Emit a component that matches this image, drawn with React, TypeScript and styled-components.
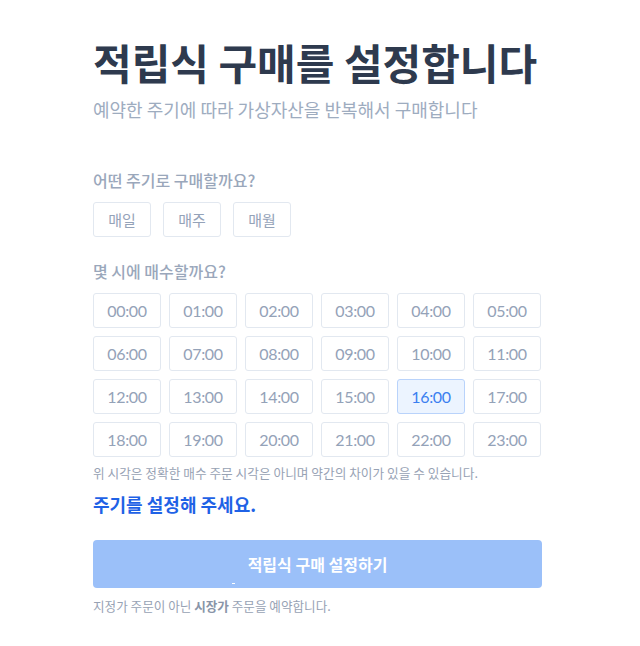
import React, { useState } from 'react'
import styled, { createGlobalStyle } from 'styled-components'

const colors = {
  title: '#2e3a4e',
  sub: '#9eacbf',
  label: '#9aa7bb',
  line: '#e2e8f0',
  time: '#94a2b8',
  blue: '#1f62e6',
  selectedBg: '#ecf4ff',
  selectedLine: '#b9d3fb',
  selectedText: '#3b7ff0',
  button: '#9bc0f9',
  note: '#97a2b4',
}

const GlobalStyle = createGlobalStyle`
  * {
    box-sizing: border-box;
  }

  body {
    margin: 0;
    background: #fff;
    font-family: 'Noto Sans CJK KR', 'Noto Sans', sans-serif;
  }
`

const PERIODS = ['매일', '매주', '매월']
const HOURS = Array.from({ length: 24 }, (_, i) => `${String(i).padStart(2, '0')}:00`)

export default function App() {
  const [hour, setHour] = useState('16:00')
  const [period, setPeriod] = useState<string | null>(null)

  return (
    <>
      <GlobalStyle />
      <Main>
        <Title>적립식 구매를 설정합니다</Title>
        <Subtitle>예약한 주기에 따라 가상자산을 반복해서 구매합니다</Subtitle>

        <Section>
          <Label>어떤 주기로 구매할까요?</Label>
          <PeriodRow>
            {PERIODS.map((p) => (
              <PeriodBtn key={p} active={period === p} onClick={() => setPeriod(p)}>
                {p}
              </PeriodBtn>
            ))}
          </PeriodRow>
        </Section>

        <Section>
          <Label>몇 시에 매수할까요?</Label>
          <TimeGrid>
            {HOURS.map((h) => (
              <TimeBtn key={h} active={hour === h} onClick={() => setHour(h)}>
                {h}
              </TimeBtn>
            ))}
          </TimeGrid>
          <Hint>위 시각은 정확한 매수 주문 시각은 아니며 약간의 차이가 있을 수 있습니다.</Hint>
        </Section>

        <Warning>주기를 설정해 주세요.</Warning>

        <Submit disabled>
          적립식 구매 설정하기
          <Tick />
        </Submit>
        <Footer>
          지정가 주문이 아닌 <b>시장가</b> 주문을 예약합니다.
        </Footer>
      </Main>
    </>
  )
}

const Main = styled.main`
  width: 449px;
  margin-left: 93px;
  padding-top: 34px;
`

const Title = styled.h1`
  margin: 0;
  font-size: 42px;
  line-height: 56px;
  font-weight: 700;
  color: ${colors.title};
`

const Subtitle = styled.p`
  margin: 7px 0 0;
  font-size: 18px;
  line-height: 24px;
  color: ${colors.sub};
`

const Section = styled.section`
  margin-top: 23px;

  &:first-of-type {
    margin-top: 48px;
  }
`

const Label = styled.h3`
  margin: 0 0 11px;
  font-size: 16px;
  line-height: 22px;
  font-weight: 500;
  color: ${colors.label};
`

const PeriodRow = styled.div`
  display: flex;
  gap: 12px;
`

const BaseBtn = styled.button<{ active: boolean }>`
  height: 35px;
  padding: 0;
  border: 1px solid ${(props) => (props.active ? colors.selectedLine : colors.line)};
  border-radius: 3px;
  background: ${(props) => (props.active ? colors.selectedBg : '#fff')};
  color: ${(props) => (props.active ? colors.selectedText : colors.time)};
  font-family: inherit;
  cursor: pointer;
`

const PeriodBtn = styled(BaseBtn)`
  width: 58px;
  font-size: 15px;
`

const TimeGrid = styled.div`
  display: grid;
  grid-template-columns: repeat(6, 68px);
  gap: 8px;
`

const TimeBtn = styled(BaseBtn)`
  font-family: Lato, 'Noto Sans', sans-serif;
  font-size: 16px;
  letter-spacing: -0.3px;
`

const Hint = styled.p`
  margin: 7px 0 0;
  font-size: 12.7px;
  line-height: 18px;
  color: ${colors.note};
`

const Warning = styled.p`
  margin: 10px 0 0;
  font-size: 18px;
  line-height: 24px;
  font-weight: 700;
  color: ${colors.blue};
`

const Submit = styled.button`
  position: relative;
  display: block;
  width: 100%;
  height: 48px;
  margin-top: 24px;
  border: none;
  border-radius: 4px;
  background: ${colors.button};
  color: #fff;
  font-family: inherit;
  font-size: 16px;
  font-weight: 700;
`

const Tick = styled.span`
  position: absolute;
  left: 139px;
  bottom: 4px;
  width: 3px;
  height: 1px;
  background: #fff;
`

const Footer = styled.p`
  margin: 9px 0 0;
  font-size: 12.6px;
  line-height: 18px;
  color: ${colors.note};

  b {
    font-weight: 700;
    color: #8894a8;
  }
`
